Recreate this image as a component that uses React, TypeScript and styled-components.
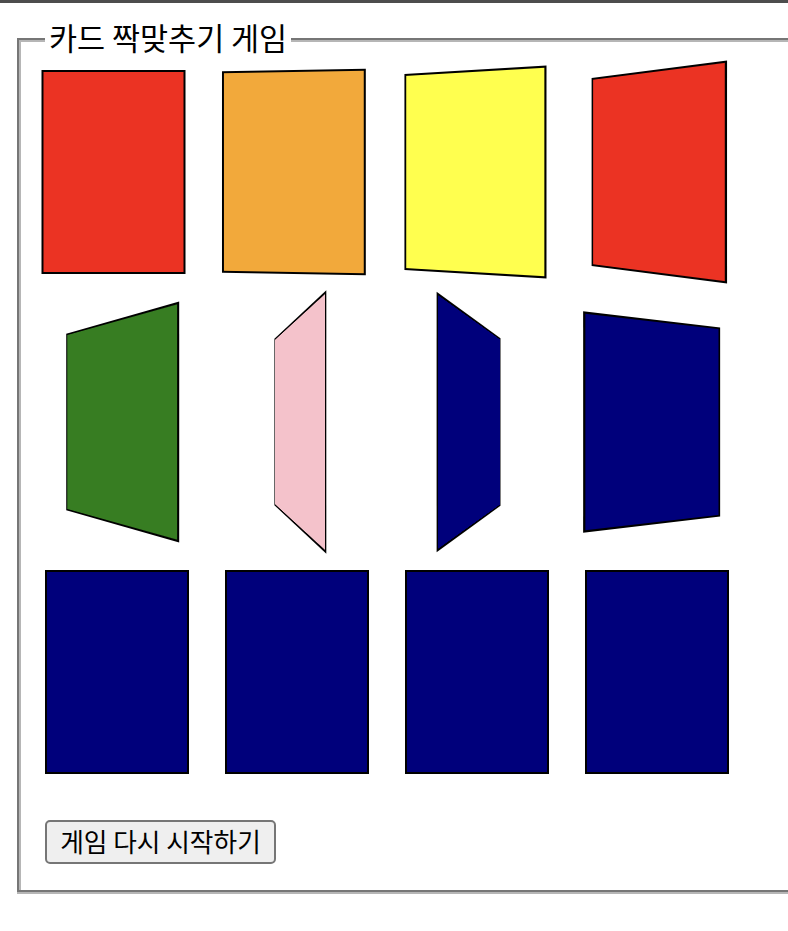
import React from 'react'
import styled, { createGlobalStyle } from 'styled-components'

const GlobalStyle = createGlobalStyle`
  html, body {
    margin: 0;
    padding: 0;
    background: #fff;
    overflow: hidden;
  }
  body {
    font-family: "Noto Sans CJK KR", "Noto Sans", sans-serif;
    color: #000;
  }
`

const Page = styled.div`
  width: 788px;
  height: 931px;
  overflow: hidden;
  box-sizing: border-box;
  border-top: 3px solid #4d4d4d;
`

const GameBox = styled.fieldset`
  box-sizing: border-box;
  width: 900px;
  height: 870px;
  margin: 19px 0 0 17px;
  padding: 14px 0 0 26px;
  border: 2px solid #767676;
  box-shadow: inset 2px 2px 0 #b6b6b6, 0 2px 0 #b6b6b6;
  min-inline-size: auto;
`

const Title = styled.legend`
  padding: 0 4px 4px;
  margin-left: 0;
  background: #fff;
  font-size: 30.5px;
  line-height: 30px;
`

const Board = styled.div`
  display: grid;
  grid-template-columns: repeat(4, 144px);
  grid-auto-rows: 204px;
  column-gap: 36px;
  row-gap: 46px;
`

const Card = styled.div<{ $color: string; $angle: number; $shift: number }>`
  box-sizing: border-box;
  border: 2px solid #000;
  background: ${(p) => p.$color};
  transform: translateX(${(p) => p.$shift}px) perspective(300px) rotateY(${(p) => p.$angle}deg);
`

const RestartButton = styled.button`
  display: block;
  box-sizing: border-box;
  width: 231px;
  height: 44px;
  margin-top: 46px;
  padding: 0 0 3px;
  background: #efefef;
  border: 2px solid #767676;
  border-radius: 5px;
  color: #000;
  font-family: inherit;
  font-size: 25.7px;
  line-height: 1;
`

const RED = '#eb3323'
const ORANGE = '#f2a93b'
const YELLOW = '#ffff4f'
const GREEN = '#377d22'
const PINK = '#f4c2cb'
const NAVY = '#00007b'

const cards = [
  { color: RED, angle: 0, shift: -3.5 },
  { color: ORANGE, angle: -3, shift: -4 },
  { color: YELLOW, angle: -10, shift: -4.5 },
  { color: RED, angle: -21, shift: -3.5 },
  { color: GREEN, angle: -40, shift: -3 },
  { color: PINK, angle: -70, shift: -2.5 },
  { color: NAVY, angle: 65, shift: -1.5 },
  { color: NAVY, angle: 19, shift: 0 },
  { color: NAVY, angle: 0, shift: 0 },
  { color: NAVY, angle: 0, shift: 0 },
  { color: NAVY, angle: 0, shift: 0 },
  { color: NAVY, angle: 0, shift: 0 },
]

const App: React.FC = () => (
  <>
    <GlobalStyle />
    <Page>
      <GameBox>
        <Title>카드 짝맞추기 게임</Title>
        <Board>
          {cards.map((card, i) => (
            <Card key={i} $color={card.color} $angle={card.angle} $shift={card.shift} />
          ))}
        </Board>
        <RestartButton>게임 다시 시작하기</RestartButton>
      </GameBox>
    </Page>
  </>
)

export default App
